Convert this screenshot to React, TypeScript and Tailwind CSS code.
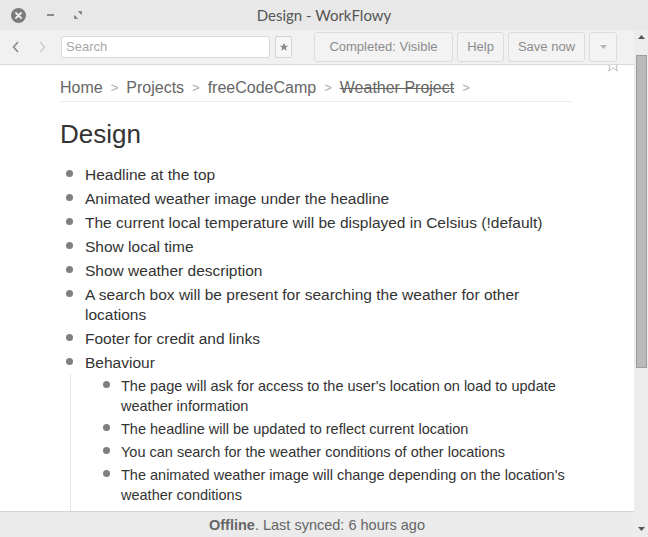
import React from 'react';

const TOP_ITEMS = [
  'Headline at the top',
  'Animated weather image under the headline',
  'The current local temperature will be displayed in Celsius (!default)',
  'Show local time',
  'Show weather description',
  'A search box will be present for searching the weather for other locations',
  'Footer for credit and links',
];

const BEHAVIOUR = [
  "The page will ask for access to the user's location on load to update weather information",
  'The headline will be updated to reflect current location',
  'You can search for the weather conditions of other locations',
  "The animated weather image will change depending on the location's weather conditions",
];

function Bullet({ small }: { small?: boolean }) {
  return (
    <span
      className={`absolute rounded-full bg-[#7f7f7f] ${small ? 'left-[-18px] top-[7px] w-[7px] h-[7px]' : 'left-[-19px] top-[7px] w-[7px] h-[7px]'}`}
    />
  );
}

function TitleBar() {
  return (
    <div className="relative h-[30px] bg-[#e8e8e8] flex items-center font-['Lato','Liberation_Sans',sans-serif]">
      <div className="flex items-center pl-[11px] gap-[17px]">
        <div className="w-[15px] h-[15px] rounded-full bg-[#7b7b7b] flex items-center justify-center">
          <svg width="7" height="7" viewBox="0 0 7 7">
            <path d="M1 1L6 6M6 1L1 6" stroke="#f0f0f0" strokeWidth="1.8" strokeLinecap="round" />
          </svg>
        </div>
        <div className="w-[7px] h-[2px] bg-[#8a8a8a] ml-[4px]" />
        <svg width="8" height="8" viewBox="0 0 8 8" className="ml-[3px]">
          <path d="M4.5 0.5H7.5V3.5Z M3.5 7.5H0.5V4.5Z" fill="#8a8a8a" stroke="#8a8a8a" strokeWidth="1" strokeLinejoin="round" />
        </svg>
      </div>
      <div className="absolute inset-0 flex items-center justify-center text-[15px] text-[#555] pointer-events-none">
        Design - WorkFlowy
      </div>
    </div>
  );
}

function Toolbar() {
  const btn =
    'shrink-0 whitespace-nowrap h-[30px] border border-[#dcdcdc] rounded-[3px] bg-[#f3f3f3] text-[13px] text-[#8c8c8c] flex items-center justify-center';
  return (
    <div className="h-[35px] bg-[#f1f1f1] border-b border-[#d9d9d9] flex items-center font-['Liberation_Sans',Arial,sans-serif]">
      <svg width="10" height="14" viewBox="0 0 10 14" className="ml-[11px] shrink-0">
        <path d="M7 2L2.5 7L7 12" fill="none" stroke="#8a8a8a" strokeWidth="1.6" />
      </svg>
      <svg width="10" height="14" viewBox="0 0 10 14" className="ml-[16px] shrink-0">
        <path d="M3 2L7.5 7L3 12" fill="none" stroke="#cfcfcf" strokeWidth="1.6" />
      </svg>
      <div className="shrink-0 ml-[14px] w-[209px] h-[22px] bg-white border border-[#d9d9d9] rounded-[3px] flex items-center px-[4px] text-[13px] text-[#a8a8a8]">
        Search
      </div>
      <div className="shrink-0 ml-[5px] w-[17px] h-[22px] border border-[#d4d4d4] rounded-[2px] bg-[#f6f6f6] flex items-center justify-center">
        <svg width="10" height="10" viewBox="0 0 24 24">
          <path d="M12 2l3 7h7l-5.5 4.5 2 7.5L12 16.5 5.5 21l2-7.5L2 9h7z" fill="#8a8a8a" />
        </svg>
      </div>
      <div className="ml-[22px] flex items-center gap-[4px]">
        <div className={`${btn} w-[139px]`}>Completed: Visible</div>
        <div className={`${btn} w-[47px]`}>Help</div>
        <div className={`${btn} w-[77px]`}>Save now</div>
        <div className={`${btn} w-[28px]`}>
          <svg width="7" height="4" viewBox="0 0 7 4">
            <path d="M0 0H7L3.5 4Z" fill="#b5b5b5" />
          </svg>
        </div>
      </div>
    </div>
  );
}

function Content() {
  return (
    <div className="relative flex-1 bg-white overflow-hidden font-['Liberation_Sans',Arial,sans-serif]">
      <svg width="16" height="16" viewBox="0 0 24 24" className="absolute right-[13px] top-[-8px]">
        <path d="M12 2l3 7h7l-5.5 4.5 2 7.5L12 16.5 5.5 21l2-7.5L2 9h7z" fill="none" stroke="#bbb" strokeWidth="1.5" strokeLinejoin="round" />
      </svg>
      <div className="ml-[60px] w-[512px]">
        <div className="pt-[14px] pb-[4px] border-b border-[#ebebeb] text-[16px] leading-[18px] text-[#666] flex items-center">
          <span>Home</span>
          <span className="mx-[8px] text-[13px] text-[#aaa]">&gt;</span>
          <span>Projects</span>
          <span className="mx-[8px] text-[13px] text-[#aaa]">&gt;</span>
          <span>freeCodeCamp</span>
          <span className="mx-[8px] text-[13px] text-[#aaa]">&gt;</span>
          <span className="line-through">Weather Project</span>
          <span className="mx-[8px] text-[13px] text-[#aaa]">&gt;</span>
        </div>
        <h1 className="mt-[17px] text-[26px] leading-[30px] text-[#333]">Design</h1>
        <ul className="mt-[14px] pl-[25px] text-[15.5px] leading-[20px] text-[#333]">
          {TOP_ITEMS.map((t) => (
            <li key={t} className="relative py-[2px]">
              <Bullet />
              {t}
            </li>
          ))}
          <li className="relative py-[2px]">
            <Bullet />
            Behaviour
          </li>
          <li className="ml-[-15px] border-l border-[#e6e6e6] pl-[50px] pb-[10px] text-[14.5px] leading-[20px] text-[#333]">
            <ul className="mt-[-1px]">
              {BEHAVIOUR.map((t) => (
                <li key={t} className="relative py-[1.5px]">
                  <Bullet small />
                  {t}
                </li>
              ))}
            </ul>
          </li>
        </ul>
      </div>
    </div>
  );
}

function Footer() {
  return (
    <div className="h-[26px] pt-[3px] bg-[#ebebeb] border-t border-[#d4d4d4] flex items-center justify-center text-[14.5px] text-[#666] font-['Liberation_Sans',Arial,sans-serif]">
      <span>
        <b className="font-bold">Offline</b>. Last synced: 6 hours ago
      </span>
    </div>
  );
}

function Scrollbar() {
  return (
    <div className="w-[14px] bg-[#ececec] flex flex-col items-center">
      <svg width="7" height="4" viewBox="0 0 7 4" className="mt-[5px]">
        <path d="M0 4H7L3.5 0Z" fill="#555" />
      </svg>
      <div className="mt-[16px] w-[11px] h-[313px] bg-[#bababa] border border-[#9d9d9d]" />
      <div className="flex-1" />
      <svg width="7" height="4" viewBox="0 0 7 4" className="mb-[6px]">
        <path d="M0 0H7L3.5 4Z" fill="#555" />
      </svg>
    </div>
  );
}

export default function App() {
  return (
    <div className="w-[648px] h-[537px] flex flex-col overflow-hidden bg-white">
      <TitleBar />
      <div className="flex flex-1 min-h-0">
        <div className="flex flex-col flex-1 min-w-0">
          <Toolbar />
          <Content />
          <Footer />
        </div>
        <Scrollbar />
      </div>
    </div>
  );
}
